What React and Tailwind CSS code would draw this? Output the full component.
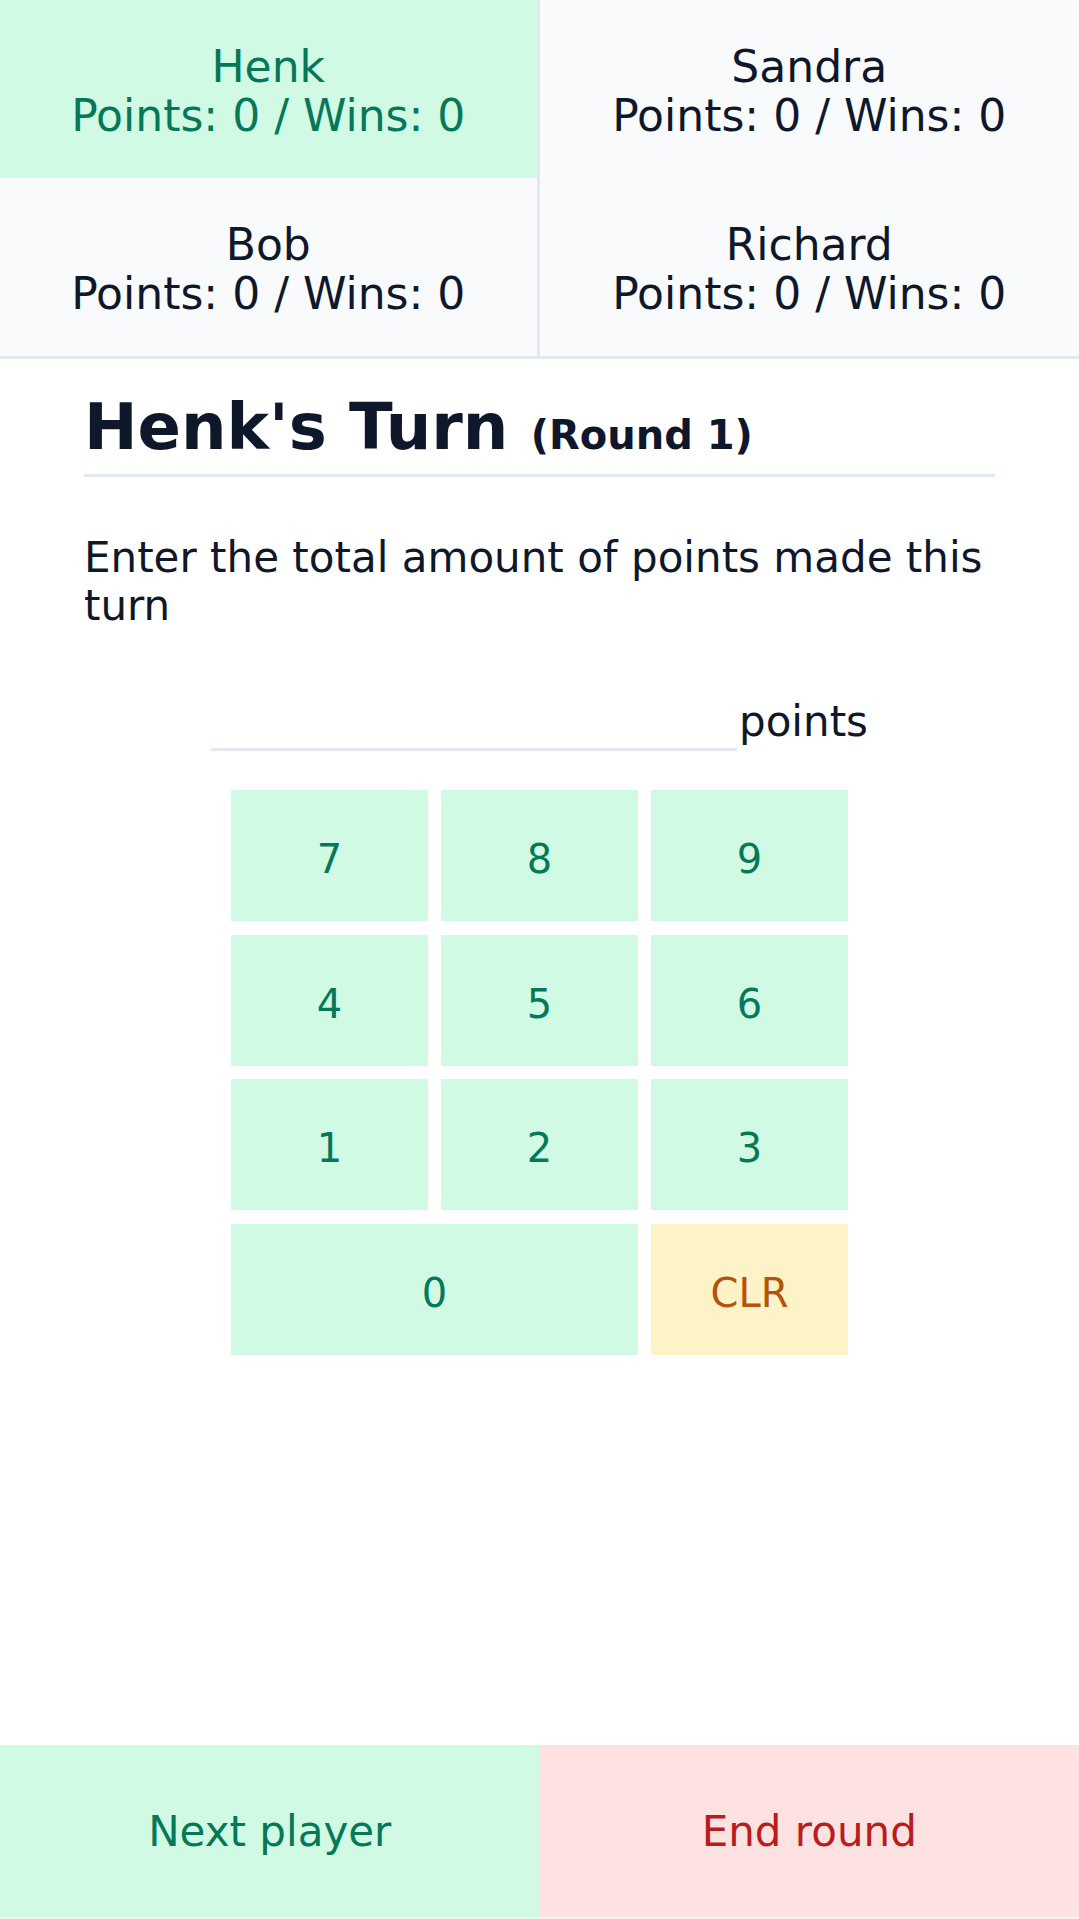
import { useState } from 'react';

const players = [
  { name: 'Henk', points: 0, wins: 0 },
  { name: 'Sandra', points: 0, wins: 0 },
  { name: 'Bob', points: 0, wins: 0 },
  { name: 'Richard', points: 0, wins: 0 },
];

const keys = ['7', '8', '9', '4', '5', '6', '1', '2', '3'];

export default function App() {
  const [current] = useState(0);
  const [round] = useState(1);
  const [value, setValue] = useState('');

  const press = (k) => setValue((v) => (v + k).replace(/^0+(?=\d)/, ''));

  return (
    <div className="flex min-h-screen flex-col bg-white font-['DejaVu_Sans',sans-serif] text-[#0f172a]">
      {/* scoreboard */}
      <div className="grid grid-cols-2 border-b-[3px] border-[#e2e8f0]">
        {players.map((p, i) => (
          <div
            key={p.name}
            className={[
              'pt-[42px] pb-[38px] text-center text-[44px] leading-[49px]',
              i % 2 === 0 ? 'border-r-[3px] border-[#e2e8f0]' : '',
              i === current ? 'bg-[#d1fae5] text-[#047857]' : 'bg-[#f8fafc] text-[#0f172a]',
            ].join(' ')}
          >
            <div>{p.name}</div>
            <div>
              Points: {p.points} / Wins: {p.wins}
            </div>
          </div>
        ))}
      </div>

      <main className="px-[84px]">
        <h1 className="mt-[31px] border-b-[3px] border-[#e2e8f0] pb-[1px] text-[64px] font-bold leading-[75px]">
          {players[current].name}'s Turn{' '}
          <span className="text-[40px]">(Round {round})</span>
        </h1>

        <p className="mt-[57px] text-[42px] leading-[48px]">
          Enter the total amount of points made this turn
        </p>

        <div className="mt-[61px] flex items-end justify-center">
          <input
            value={value}
            readOnly
            className="h-[60px] w-[526px] border-b-[3px] border-[#e2e8f0] bg-transparent text-right text-[42px] outline-none"
          />
          <span className="mb-[5px] ml-[2px] text-[42px] leading-[48px]">points</span>
        </div>

        <div className="mx-auto mt-[39px] grid w-[617px] grid-cols-3 gap-x-[13px] gap-y-[13.5px]">
          {keys.map((k) => (
            <button
              key={k}
              onClick={() => press(k)}
              className="h-[131px] bg-[#d1fae5] pt-[7px] text-[40px] text-[#047857]"
            >
              {k}
            </button>
          ))}
          <button
            onClick={() => press('0')}
            className="col-span-2 h-[131px] bg-[#d1fae5] pt-[7px] text-[40px] text-[#047857]"
          >
            0
          </button>
          <button
            onClick={() => setValue('')}
            className="h-[131px] bg-[#fef3c7] pt-[7px] text-[40px] text-[#b45309]"
          >
            CLR
          </button>
        </div>
      </main>

      <div className="mt-auto grid grid-cols-2 border-b-2 border-[#f1f5f9]">
        <button className="h-[172px] bg-[#d1fae5] text-[42px] text-[#047857]">Next player</button>
        <button className="h-[172px] bg-[#fee2e2] text-[42px] text-[#b91c1c]">End round</button>
      </div>
    </div>
  );
}
